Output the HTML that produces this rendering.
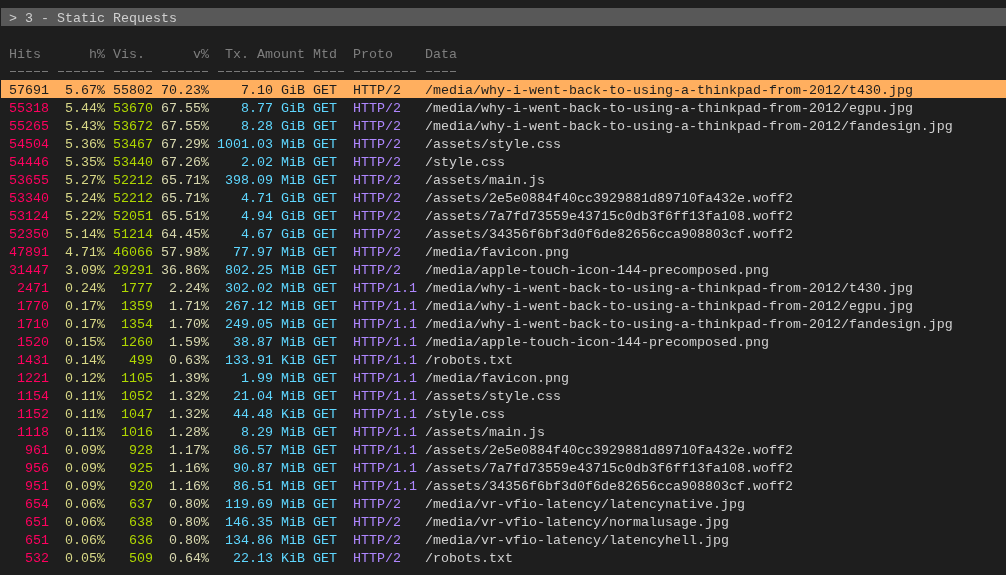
<!DOCTYPE html><html><head><meta charset="utf-8"><style>

html,body{margin:0;padding:0;}
body{width:1006px;height:575px;overflow:hidden;background:#1e1e1e;position:relative;
 font-family:"Liberation Mono",monospace;font-size:13.3333px;}
.l{position:absolute;left:0;right:0;height:18px;line-height:18px;white-space:pre;}
.title{background:#585858;left:1px;}
.hl{background:#ffaf5f;left:1px;}
.hl span{color:#1e1e1e !important;}
.title .t{color:#d0d0d0;}
.hd{color:#7e7e7e;}
.sp{color:#7a7a7a;}
.hi{color:#ff005f;}
.hp{color:#d7d787;}
.vi{color:#afd700;}
.vp{color:#d7d7af;}
.tx{color:#5fd7ff;}
.mt{color:#5fd7ff;}
.pr{color:#af87ff;}
.da{color:#d0d0d0;}
.txt{position:absolute;left:1px;top:2px;}
.dash{position:absolute;top:71px;height:1px;background:repeating-linear-gradient(90deg,#7a7a7a 0 6px,transparent 6px 8px);}
body{will-change:transform;}

</style></head><body>
<div class="l title" style="top:8px"><div class="txt" style="left:0"><span class="t"> &gt; 3 - Static Requests</span></div></div>
<div class="l" style="top:44px"><div class="txt"><span class="hd"> Hits      h% Vis.      v%  Tx. Amount Mtd  Proto    Data</span></div></div>
<div class="l hl" style="top:80px"><div class="txt" style="left:0"><span class="hi"> 57691</span><span class="w"> </span><span class="hp"> 5.67%</span><span class="w"> </span><span class="vi">55802</span><span class="w"> </span><span class="vp">70.23%</span><span class="w"> </span><span class="tx">   7.10 GiB</span><span class="w"> </span><span class="mt">GET </span><span class="w"> </span><span class="pr">HTTP/2  </span><span class="w"> </span><span class="da">/media/why-i-went-back-to-using-a-thinkpad-from-2012/t430.jpg</span></div></div>
<div class="l" style="top:98px"><div class="txt"><span class="hi"> 55318</span><span class="w"> </span><span class="hp"> 5.44%</span><span class="w"> </span><span class="vi">53670</span><span class="w"> </span><span class="vp">67.55%</span><span class="w"> </span><span class="tx">   8.77 GiB</span><span class="w"> </span><span class="mt">GET </span><span class="w"> </span><span class="pr">HTTP/2  </span><span class="w"> </span><span class="da">/media/why-i-went-back-to-using-a-thinkpad-from-2012/egpu.jpg</span></div></div>
<div class="l" style="top:116px"><div class="txt"><span class="hi"> 55265</span><span class="w"> </span><span class="hp"> 5.43%</span><span class="w"> </span><span class="vi">53672</span><span class="w"> </span><span class="vp">67.55%</span><span class="w"> </span><span class="tx">   8.28 GiB</span><span class="w"> </span><span class="mt">GET </span><span class="w"> </span><span class="pr">HTTP/2  </span><span class="w"> </span><span class="da">/media/why-i-went-back-to-using-a-thinkpad-from-2012/fandesign.jpg</span></div></div>
<div class="l" style="top:134px"><div class="txt"><span class="hi"> 54504</span><span class="w"> </span><span class="hp"> 5.36%</span><span class="w"> </span><span class="vi">53467</span><span class="w"> </span><span class="vp">67.29%</span><span class="w"> </span><span class="tx">1001.03 MiB</span><span class="w"> </span><span class="mt">GET </span><span class="w"> </span><span class="pr">HTTP/2  </span><span class="w"> </span><span class="da">/assets/style.css</span></div></div>
<div class="l" style="top:152px"><div class="txt"><span class="hi"> 54446</span><span class="w"> </span><span class="hp"> 5.35%</span><span class="w"> </span><span class="vi">53440</span><span class="w"> </span><span class="vp">67.26%</span><span class="w"> </span><span class="tx">   2.02 MiB</span><span class="w"> </span><span class="mt">GET </span><span class="w"> </span><span class="pr">HTTP/2  </span><span class="w"> </span><span class="da">/style.css</span></div></div>
<div class="l" style="top:170px"><div class="txt"><span class="hi"> 53655</span><span class="w"> </span><span class="hp"> 5.27%</span><span class="w"> </span><span class="vi">52212</span><span class="w"> </span><span class="vp">65.71%</span><span class="w"> </span><span class="tx"> 398.09 MiB</span><span class="w"> </span><span class="mt">GET </span><span class="w"> </span><span class="pr">HTTP/2  </span><span class="w"> </span><span class="da">/assets/main.js</span></div></div>
<div class="l" style="top:188px"><div class="txt"><span class="hi"> 53340</span><span class="w"> </span><span class="hp"> 5.24%</span><span class="w"> </span><span class="vi">52212</span><span class="w"> </span><span class="vp">65.71%</span><span class="w"> </span><span class="tx">   4.71 GiB</span><span class="w"> </span><span class="mt">GET </span><span class="w"> </span><span class="pr">HTTP/2  </span><span class="w"> </span><span class="da">/assets/2e5e0884f40cc3929881d89710fa432e.woff2</span></div></div>
<div class="l" style="top:206px"><div class="txt"><span class="hi"> 53124</span><span class="w"> </span><span class="hp"> 5.22%</span><span class="w"> </span><span class="vi">52051</span><span class="w"> </span><span class="vp">65.51%</span><span class="w"> </span><span class="tx">   4.94 GiB</span><span class="w"> </span><span class="mt">GET </span><span class="w"> </span><span class="pr">HTTP/2  </span><span class="w"> </span><span class="da">/assets/7a7fd73559e43715c0db3f6ff13fa108.woff2</span></div></div>
<div class="l" style="top:224px"><div class="txt"><span class="hi"> 52350</span><span class="w"> </span><span class="hp"> 5.14%</span><span class="w"> </span><span class="vi">51214</span><span class="w"> </span><span class="vp">64.45%</span><span class="w"> </span><span class="tx">   4.67 GiB</span><span class="w"> </span><span class="mt">GET </span><span class="w"> </span><span class="pr">HTTP/2  </span><span class="w"> </span><span class="da">/assets/34356f6bf3d0f6de82656cca908803cf.woff2</span></div></div>
<div class="l" style="top:242px"><div class="txt"><span class="hi"> 47891</span><span class="w"> </span><span class="hp"> 4.71%</span><span class="w"> </span><span class="vi">46066</span><span class="w"> </span><span class="vp">57.98%</span><span class="w"> </span><span class="tx">  77.97 MiB</span><span class="w"> </span><span class="mt">GET </span><span class="w"> </span><span class="pr">HTTP/2  </span><span class="w"> </span><span class="da">/media/favicon.png</span></div></div>
<div class="l" style="top:260px"><div class="txt"><span class="hi"> 31447</span><span class="w"> </span><span class="hp"> 3.09%</span><span class="w"> </span><span class="vi">29291</span><span class="w"> </span><span class="vp">36.86%</span><span class="w"> </span><span class="tx"> 802.25 MiB</span><span class="w"> </span><span class="mt">GET </span><span class="w"> </span><span class="pr">HTTP/2  </span><span class="w"> </span><span class="da">/media/apple-touch-icon-144-precomposed.png</span></div></div>
<div class="l" style="top:278px"><div class="txt"><span class="hi">  2471</span><span class="w"> </span><span class="hp"> 0.24%</span><span class="w"> </span><span class="vi"> 1777</span><span class="w"> </span><span class="vp"> 2.24%</span><span class="w"> </span><span class="tx"> 302.02 MiB</span><span class="w"> </span><span class="mt">GET </span><span class="w"> </span><span class="pr">HTTP/1.1</span><span class="w"> </span><span class="da">/media/why-i-went-back-to-using-a-thinkpad-from-2012/t430.jpg</span></div></div>
<div class="l" style="top:296px"><div class="txt"><span class="hi">  1770</span><span class="w"> </span><span class="hp"> 0.17%</span><span class="w"> </span><span class="vi"> 1359</span><span class="w"> </span><span class="vp"> 1.71%</span><span class="w"> </span><span class="tx"> 267.12 MiB</span><span class="w"> </span><span class="mt">GET </span><span class="w"> </span><span class="pr">HTTP/1.1</span><span class="w"> </span><span class="da">/media/why-i-went-back-to-using-a-thinkpad-from-2012/egpu.jpg</span></div></div>
<div class="l" style="top:314px"><div class="txt"><span class="hi">  1710</span><span class="w"> </span><span class="hp"> 0.17%</span><span class="w"> </span><span class="vi"> 1354</span><span class="w"> </span><span class="vp"> 1.70%</span><span class="w"> </span><span class="tx"> 249.05 MiB</span><span class="w"> </span><span class="mt">GET </span><span class="w"> </span><span class="pr">HTTP/1.1</span><span class="w"> </span><span class="da">/media/why-i-went-back-to-using-a-thinkpad-from-2012/fandesign.jpg</span></div></div>
<div class="l" style="top:332px"><div class="txt"><span class="hi">  1520</span><span class="w"> </span><span class="hp"> 0.15%</span><span class="w"> </span><span class="vi"> 1260</span><span class="w"> </span><span class="vp"> 1.59%</span><span class="w"> </span><span class="tx">  38.87 MiB</span><span class="w"> </span><span class="mt">GET </span><span class="w"> </span><span class="pr">HTTP/1.1</span><span class="w"> </span><span class="da">/media/apple-touch-icon-144-precomposed.png</span></div></div>
<div class="l" style="top:350px"><div class="txt"><span class="hi">  1431</span><span class="w"> </span><span class="hp"> 0.14%</span><span class="w"> </span><span class="vi">  499</span><span class="w"> </span><span class="vp"> 0.63%</span><span class="w"> </span><span class="tx"> 133.91 KiB</span><span class="w"> </span><span class="mt">GET </span><span class="w"> </span><span class="pr">HTTP/1.1</span><span class="w"> </span><span class="da">/robots.txt</span></div></div>
<div class="l" style="top:368px"><div class="txt"><span class="hi">  1221</span><span class="w"> </span><span class="hp"> 0.12%</span><span class="w"> </span><span class="vi"> 1105</span><span class="w"> </span><span class="vp"> 1.39%</span><span class="w"> </span><span class="tx">   1.99 MiB</span><span class="w"> </span><span class="mt">GET </span><span class="w"> </span><span class="pr">HTTP/1.1</span><span class="w"> </span><span class="da">/media/favicon.png</span></div></div>
<div class="l" style="top:386px"><div class="txt"><span class="hi">  1154</span><span class="w"> </span><span class="hp"> 0.11%</span><span class="w"> </span><span class="vi"> 1052</span><span class="w"> </span><span class="vp"> 1.32%</span><span class="w"> </span><span class="tx">  21.04 MiB</span><span class="w"> </span><span class="mt">GET </span><span class="w"> </span><span class="pr">HTTP/1.1</span><span class="w"> </span><span class="da">/assets/style.css</span></div></div>
<div class="l" style="top:404px"><div class="txt"><span class="hi">  1152</span><span class="w"> </span><span class="hp"> 0.11%</span><span class="w"> </span><span class="vi"> 1047</span><span class="w"> </span><span class="vp"> 1.32%</span><span class="w"> </span><span class="tx">  44.48 KiB</span><span class="w"> </span><span class="mt">GET </span><span class="w"> </span><span class="pr">HTTP/1.1</span><span class="w"> </span><span class="da">/style.css</span></div></div>
<div class="l" style="top:422px"><div class="txt"><span class="hi">  1118</span><span class="w"> </span><span class="hp"> 0.11%</span><span class="w"> </span><span class="vi"> 1016</span><span class="w"> </span><span class="vp"> 1.28%</span><span class="w"> </span><span class="tx">   8.29 MiB</span><span class="w"> </span><span class="mt">GET </span><span class="w"> </span><span class="pr">HTTP/1.1</span><span class="w"> </span><span class="da">/assets/main.js</span></div></div>
<div class="l" style="top:440px"><div class="txt"><span class="hi">   961</span><span class="w"> </span><span class="hp"> 0.09%</span><span class="w"> </span><span class="vi">  928</span><span class="w"> </span><span class="vp"> 1.17%</span><span class="w"> </span><span class="tx">  86.57 MiB</span><span class="w"> </span><span class="mt">GET </span><span class="w"> </span><span class="pr">HTTP/1.1</span><span class="w"> </span><span class="da">/assets/2e5e0884f40cc3929881d89710fa432e.woff2</span></div></div>
<div class="l" style="top:458px"><div class="txt"><span class="hi">   956</span><span class="w"> </span><span class="hp"> 0.09%</span><span class="w"> </span><span class="vi">  925</span><span class="w"> </span><span class="vp"> 1.16%</span><span class="w"> </span><span class="tx">  90.87 MiB</span><span class="w"> </span><span class="mt">GET </span><span class="w"> </span><span class="pr">HTTP/1.1</span><span class="w"> </span><span class="da">/assets/7a7fd73559e43715c0db3f6ff13fa108.woff2</span></div></div>
<div class="l" style="top:476px"><div class="txt"><span class="hi">   951</span><span class="w"> </span><span class="hp"> 0.09%</span><span class="w"> </span><span class="vi">  920</span><span class="w"> </span><span class="vp"> 1.16%</span><span class="w"> </span><span class="tx">  86.51 MiB</span><span class="w"> </span><span class="mt">GET </span><span class="w"> </span><span class="pr">HTTP/1.1</span><span class="w"> </span><span class="da">/assets/34356f6bf3d0f6de82656cca908803cf.woff2</span></div></div>
<div class="l" style="top:494px"><div class="txt"><span class="hi">   654</span><span class="w"> </span><span class="hp"> 0.06%</span><span class="w"> </span><span class="vi">  637</span><span class="w"> </span><span class="vp"> 0.80%</span><span class="w"> </span><span class="tx"> 119.69 MiB</span><span class="w"> </span><span class="mt">GET </span><span class="w"> </span><span class="pr">HTTP/2  </span><span class="w"> </span><span class="da">/media/vr-vfio-latency/latencynative.jpg</span></div></div>
<div class="l" style="top:512px"><div class="txt"><span class="hi">   651</span><span class="w"> </span><span class="hp"> 0.06%</span><span class="w"> </span><span class="vi">  638</span><span class="w"> </span><span class="vp"> 0.80%</span><span class="w"> </span><span class="tx"> 146.35 MiB</span><span class="w"> </span><span class="mt">GET </span><span class="w"> </span><span class="pr">HTTP/2  </span><span class="w"> </span><span class="da">/media/vr-vfio-latency/normalusage.jpg</span></div></div>
<div class="l" style="top:530px"><div class="txt"><span class="hi">   651</span><span class="w"> </span><span class="hp"> 0.06%</span><span class="w"> </span><span class="vi">  636</span><span class="w"> </span><span class="vp"> 0.80%</span><span class="w"> </span><span class="tx"> 134.86 MiB</span><span class="w"> </span><span class="mt">GET </span><span class="w"> </span><span class="pr">HTTP/2  </span><span class="w"> </span><span class="da">/media/vr-vfio-latency/latencyhell.jpg</span></div></div>
<div class="l" style="top:548px"><div class="txt"><span class="hi">   532</span><span class="w"> </span><span class="hp"> 0.05%</span><span class="w"> </span><span class="vi">  509</span><span class="w"> </span><span class="vp"> 0.64%</span><span class="w"> </span><span class="tx">  22.13 KiB</span><span class="w"> </span><span class="mt">GET </span><span class="w"> </span><span class="pr">HTTP/2  </span><span class="w"> </span><span class="da">/robots.txt</span></div></div>
<div class="dash" style="left:10px;width:40px"></div>
<div class="dash" style="left:58px;width:48px"></div>
<div class="dash" style="left:114px;width:40px"></div>
<div class="dash" style="left:162px;width:48px"></div>
<div class="dash" style="left:218px;width:88px"></div>
<div class="dash" style="left:314px;width:32px"></div>
<div class="dash" style="left:354px;width:64px"></div>
<div class="dash" style="left:426px;width:32px"></div>
</body></html>
